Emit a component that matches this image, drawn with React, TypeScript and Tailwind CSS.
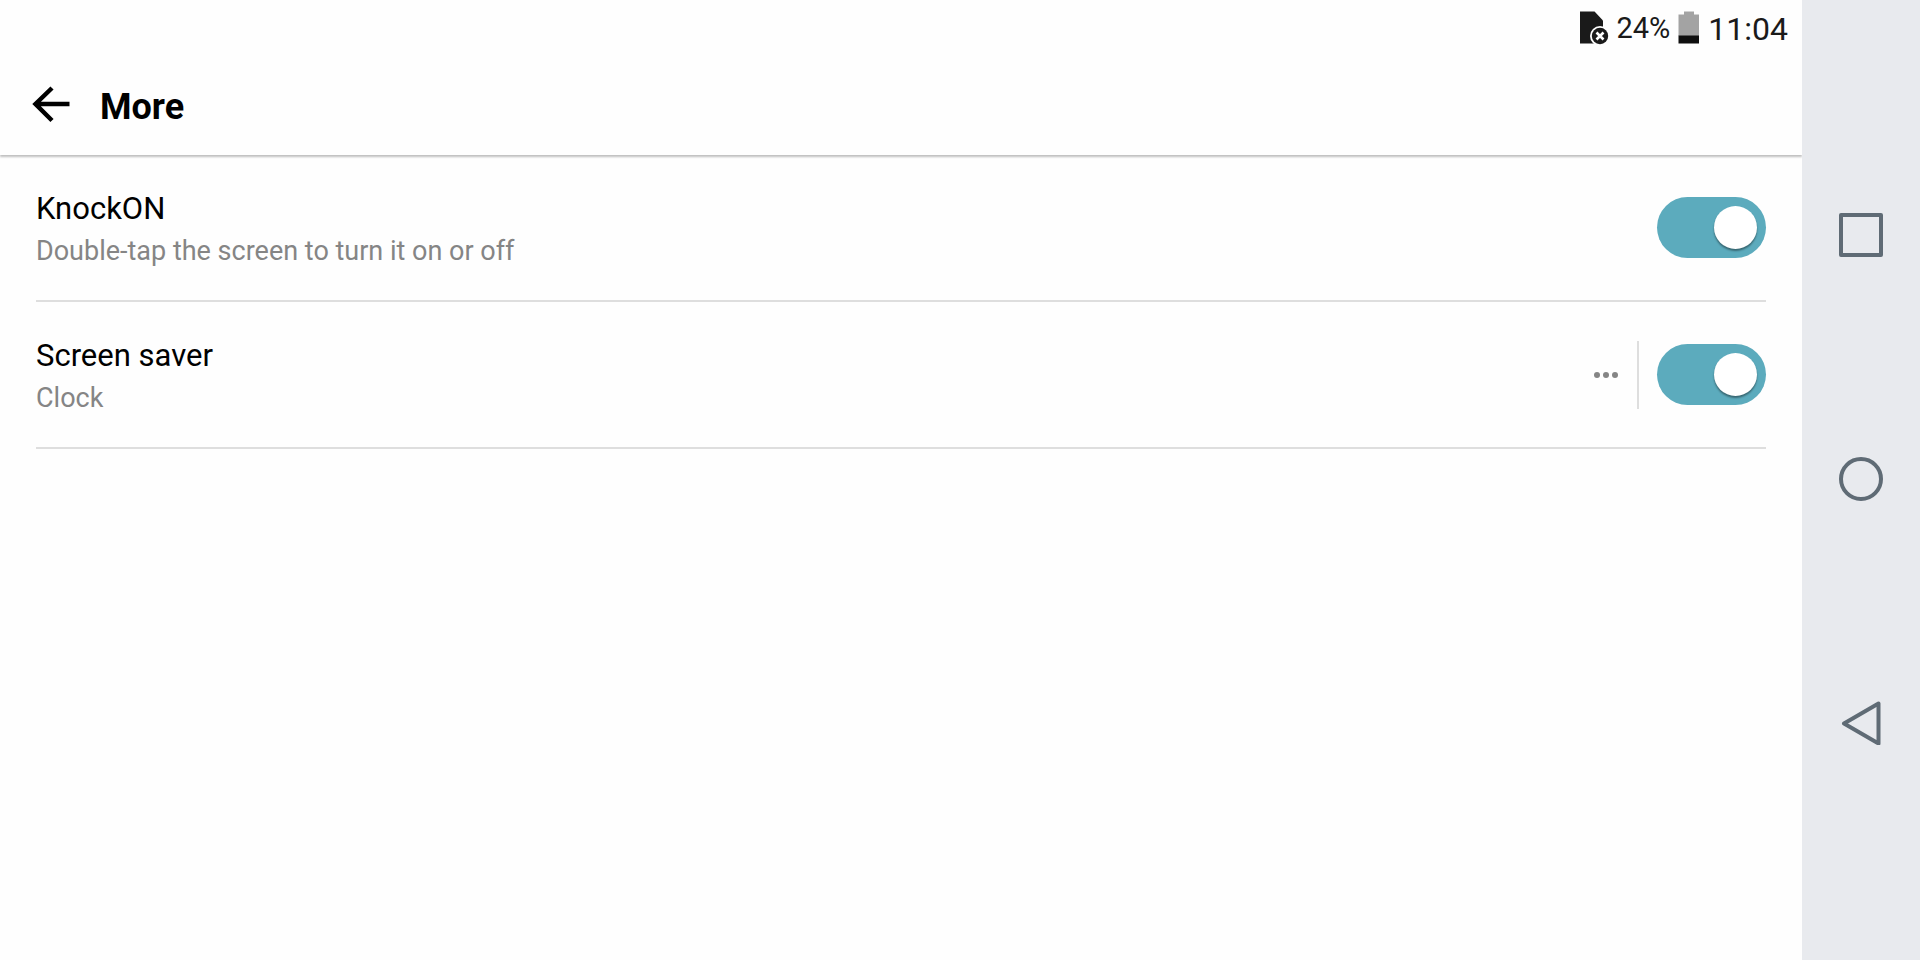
import { useState } from "react";

type Setting = {
  id: string;
  title: string;
  summary: string;
  hasOptions?: boolean;
};

const SETTINGS: Setting[] = [
  { id: "knock-on", title: "KnockON", summary: "Double-tap the screen to turn it on or off" },
  { id: "screen-saver", title: "Screen saver", summary: "Clock", hasOptions: true },
];

export default function App() {
  return (
    <div className="flex min-h-screen bg-[#fefefe] font-['Roboto',sans-serif] text-black">
      <div className="flex min-w-0 flex-1 flex-col">
        <StatusBar />
        <Header title="More" />
        <main className="px-9">
          {SETTINGS.map(setting => (
            <SettingRow key={setting.id} setting={setting} />
          ))}
        </main>
      </div>
      <NavBar />
    </div>
  );
}

function StatusBar() {
  return (
    <div className="flex h-14 items-center justify-end pr-[14px] text-[#1a1a1a]">
      {/* No SIM */}
      <svg width="30" height="34" viewBox="0 0 30 34" className="mr-[7px]">
        <path d="M1 0.5h14.5l8.5 9v23H1z" fill="#1a1a1a" />
        <circle cx="21" cy="25" r="10" fill="#fefefe" />
        <circle cx="21" cy="25" r="8.2" fill="#1a1a1a" />
        <path d="M17.5 21.5l7 7M24.5 21.5l-7 7" stroke="#fefefe" strokeWidth="2.6" />
      </svg>
      <span className="pt-[2px] text-[29px]">24%</span>
      <svg width="22" height="34" viewBox="0 0 22 34" className="mx-2">
        <path d="M6 0.5h10v3h5V25H0.5V3.5H6z" fill="#a3a3a3" />
        <path d="M0.5 24.5H21V32.5H0.5z" fill="#0f0f0f" />
      </svg>
      <span className="pt-[2px] text-[32px]">11:04</span>
    </div>
  );
}

function Header({ title }: { title: string }) {
  return (
    <header className="flex h-[99px] items-center pl-8 shadow-[0_2px_2px_rgba(0,0,0,0.25)]">
      <button type="button" aria-label="Back" className="mr-7">
        <svg width="40" height="40" viewBox="0 0 40 40" fill="none" stroke="#000" strokeWidth="4.5">
          <path d="M20 2L3.5 18L20 34.500M3.500 18h34" />
        </svg>
      </button>
      <h1 className="pt-[2px] text-[36px] font-bold">{title}</h1>
    </header>
  );
}

function SettingRow({ setting }: { setting: Setting }) {
  const [enabled, setEnabled] = useState(true);

  return (
    <div className="flex h-[147px] items-center border-b-2 border-[#dedede]">
      <label htmlFor={setting.id} className="flex-1 pt-1">
        <span className="block text-[31px] leading-[42px]">{setting.title}</span>
        <span className="block text-[27px] leading-[42px] text-[#858585]">{setting.summary}</span>
      </label>
      {setting.hasOptions && (
        <div className="mr-[18px] flex h-[68px] items-center border-r-2 border-[#dedede] pr-[18px]">
          <button type="button" aria-label={`${setting.title} options`}>
            <svg width="26" height="8" viewBox="0 0 26 8" fill="#858585">
              <circle cx="4" cy="4" r="3" />
              <circle cx="13" cy="4" r="3" />
              <circle cx="22" cy="4" r="3" />
            </svg>
          </button>
        </div>
      )}
      <input
        id={setting.id}
        type="checkbox"
        role="switch"
        checked={enabled}
        onChange={e => setEnabled(e.target.checked)}
        className="flex h-[61px] w-[109px] cursor-pointer appearance-none items-center rounded-full bg-[#bdbdbd] px-[9px] transition-colors before:size-[43px] before:rounded-full before:bg-white before:shadow-[0_2px_2px_rgba(0,0,0,0.4)] before:content-[''] checked:justify-end checked:bg-[#5cabbd]"
      />
    </div>
  );
}

function NavBar() {
  return (
    <nav className="flex w-[118px] flex-col justify-center bg-[#e8eaee] pb-[2px]">
      <button type="button" aria-label="Recent apps" className="flex h-[244px] items-center justify-center">
        <svg width="44" height="44" viewBox="0 0 44 44" fill="none" stroke="#5f6b75" strokeWidth="4" strokeLinejoin="round">
          <path d="M2 2h40v40H2z" />
        </svg>
      </button>
      <button type="button" aria-label="Home" className="flex h-[244px] items-center justify-center">
        <svg width="44" height="44" viewBox="0 0 44 44" fill="none" stroke="#5f6b75" strokeWidth="4">
          <circle cx="22" cy="22" r="20" />
        </svg>
      </button>
      <button type="button" aria-label="Back" className="flex h-[244px] items-center justify-center">
        <svg width="44" height="44" viewBox="0 0 44 44" fill="none" stroke="#5f6b75" strokeWidth="4" strokeLinejoin="round">
          <path d="M39.500 2.500v40L5 22.500z" />
        </svg>
      </button>
    </nav>
  );
}
